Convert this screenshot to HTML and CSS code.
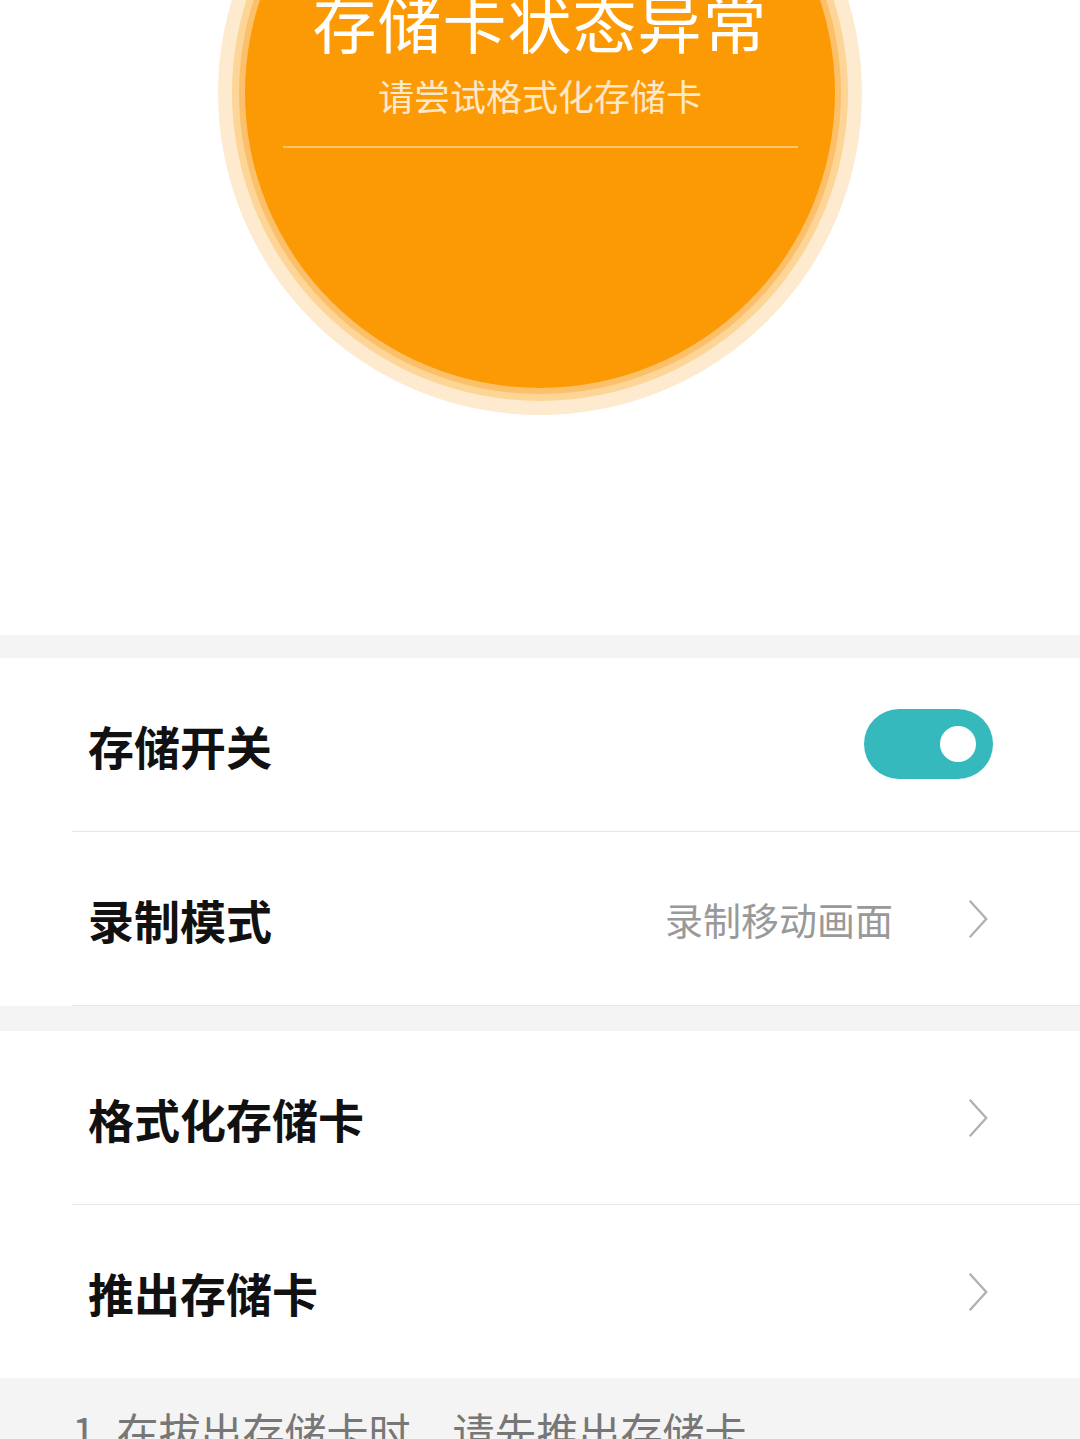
FILE: index.html
```html
<!DOCTYPE html>
<html>
<head>
	<meta charset="utf-8">
	<title>存储卡</title>
	<link rel="stylesheet" href="styles.css">
</head>
<body>
	<section class="hero">
		<div class="disc">
			<div class="disc-title">存储卡状态异常</div>
			<div class="disc-sub">请尝试格式化存储卡</div>
			<div class="disc-line"></div>
		</div>
	</section>

	<div class="gap"></div>
	<section class="group">
		<div class="row">
			<span class="label">存储开关</span>
			<span class="switch on"><i class="knob"></i></span>
		</div>
		<div class="row">
			<span class="label">录制模式</span>
			<span class="value">录制移动画面</span>
			<svg class="chev" viewBox="0 0 24 44"><polyline points="3,2 21,22 3,42"/></svg>
		</div>
	</section>

	<div class="gap wide"></div>
	<section class="group">
		<div class="row">
			<span class="label">格式化存储卡</span>
			<svg class="chev" viewBox="0 0 24 44"><polyline points="3,2 21,22 3,42"/></svg>
		</div>
		<div class="row">
			<span class="label">推出存储卡</span>
			<svg class="chev" viewBox="0 0 24 44"><polyline points="3,2 21,22 3,42"/></svg>
		</div>
	</section>

	<section class="notes">
		<p>1. 在拔出存储卡时，请先推出存储卡</p>
	</section>
</body>
</html>
```

FILE: styles.css
```css
html, body{margin: 0; background: #fff;}
body{font-family: "Noto Sans CJK SC", "Noto Sans", sans-serif; color: #111; overflow: hidden;}

/* top status disc */
.hero{height: 635px; overflow: hidden; display: flex; justify-content: center;}
.disc{width: 590px; height: 590px; flex: none;
	margin-top: -202px;
	border-radius: 50%;
	background: #fc9a06;
	box-shadow: 0 0 0 6px #fcc06a, 0 0 0 13px #fdd596, 0 0 0 27px #feebcf;
	display: flex; flex-direction: column; align-items: center;
	padding-top: 190px; box-sizing: border-box;}
.disc-title{font-size: 64px; line-height: 64px; color: #fff; letter-spacing: 1px;}
.disc-sub{font-size: 36px; line-height: 36px; color: #fde9c9; margin-top: 25px;}
.disc-line{width: 515px; height: 2px; background: #fcc46c; margin-top: 33px;}

/* lists */
.gap{height: 23px; background: #f4f4f4;}
.gap.wide{height: 25px;}
.group{background: #fff;}
.row{height: 173px; margin-left: 72px;
	padding: 0 87px 0 16px;
	border-bottom: 1px solid #e7e7e7;
	display: flex; align-items: center;}
.label{flex: 1; font-size: 46px; font-weight: 700; color: #111;}
.value{font-size: 38px; color: #999; margin-right: 74px;}
.chev{width: 22px; height: 42px; flex: none; margin-right: 4px;}
.chev polyline{fill: none; stroke: #b0b0b0; stroke-width: 2.5;}

.switch{width: 129px; height: 70px; border-radius: 35px; background: #36b9bc;
	display: flex; align-items: center; justify-content: flex-end;
	padding-right: 17px; box-sizing: border-box; margin-top: -1px;}
.knob{width: 36px; height: 36px; border-radius: 50%; background: #fff;}

.notes{background: #f4f4f4; padding: 22px 72px 40px; margin-top: -1px;}
.notes p{margin: 0; font-size: 42px; color: #777;}
```
